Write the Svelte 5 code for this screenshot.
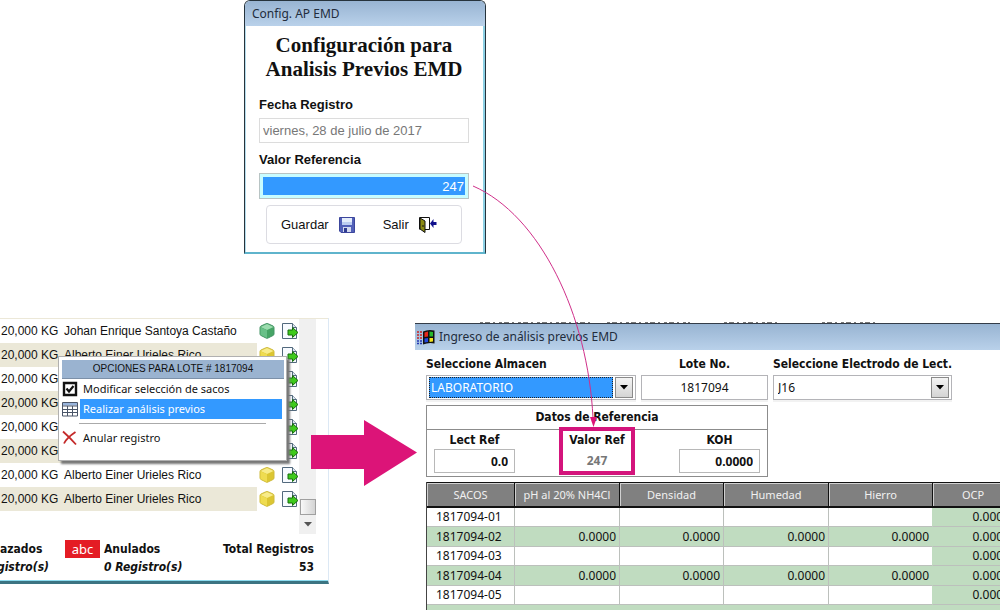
<script>
  const lots = [
    { name: 'Johan Enrique Santoya Castaño', tone: 'green' },
    { name: 'Alberto Einer Urieles Rico', tone: 'gold' },
    { name: '', tone: '' },
    { name: '', tone: '' },
    { name: '', tone: '' },
    { name: '', tone: '' },
    { name: 'Alberto Einer Urieles Rico', tone: 'gold' },
    { name: 'Alberto Einer Urieles Rico', tone: 'gold' }
  ];
  const heads = ['SACOS', 'pH al 20% NH4Cl', 'Densidad', 'Humedad', 'Hierro', 'OCP'];
  const sacks = [
    { id: '1817094-01', v: '' },
    { id: '1817094-02', v: '0.0000' },
    { id: '1817094-03', v: '' },
    { id: '1817094-04', v: '0.0000' },
    { id: '1817094-05', v: '' }
  ];
  let reference = $state('247');
</script>

{#snippet cube(tone)}
  <svg class="cube" width="18" height="18" viewBox="0 0 18 18" aria-hidden="true">
    <path d="M9 1.500Q10 1.500 15 4Q16 4.500 16 5.500V12Q16 13 15 13.500L10 16Q9 16.500 8 16L3 13.500Q2 13 2 12V5.500Q2 4.500 3 4Q8 1.500 9 1.500Z" fill={tone === 'green' ? '#46a465' : '#dcc632'} stroke={tone === 'green' ? '#459566' : '#cfbb3c'} />
    <path d="M9 2 15.500 5 9 8 2.500 5Z" fill={tone === 'green' ? '#9bdcae' : '#f8ec8a'} />
    <path d="M2.500 5.200 9 8.200V16L2.500 12.800Z" fill={tone === 'green' ? '#69c088' : '#efdc50'} />
  </svg>
{/snippet}

{#snippet exportIcon()}
  <svg class="export" width="17" height="18" viewBox="0 0 17 18" aria-hidden="true">
    <path d="M.5 1.500H10.500L14.500 5.500V16.500H.5Z" fill="#f8fbff" stroke="#52697d" />
    <path d="M10.500 1.500V5.500H14.500" fill="#dce6ee" stroke="#52697d" />
    <path d="M6 8H10.500V5.500L16 10.500 10.500 15.500V13H6Z" fill="#3fca1c" stroke="#176d0c" />
  </svg>
{/snippet}

<main class="stage">
  <section class="dialog">
    <header class="caption">Config. AP EMD</header>
    <form class="dialog-body" onsubmit={(e) => e.preventDefault()}>
      <h1>Configuración para<br />Analisis Previos EMD</h1>
      <label for="fecha">Fecha Registro</label>
      <input id="fecha" class="date" value="viernes, 28 de julio de 2017" readonly />
      <label for="valor">Valor Referencia</label>
      <div class="focus-ring"><input id="valor" bind:value={reference} /></div>
      <div class="actions">
        <button type="submit">Guardar
          <svg width="16" height="16" viewBox="0 0 16 16" aria-hidden="true">
            <path d="M.5.5H15.5V15.5H2L.5 14Z" fill="#5260b8" stroke="#3c469c" />
            <path d="M3 1H13V8H3Z" fill="#e4edfb" />
            <path d="M3 5H13V8H3Z" fill="#bccdf0" />
            <path d="M4 10H12V15H4Z" fill="#d3d9ee" />
            <path d="M5 11H8V15H5Z" fill="#303c90" />
          </svg>
        </button>
        <button type="button">Salir
          <svg width="18" height="16" viewBox="0 0 18 16" aria-hidden="true">
            <path d="M.5 12.5V.5H10.5V12.5H6" fill="#fff" stroke="#111" />
            <path d="M1 1 6 4V15.5L1 12Z" fill="#8a8a12" stroke="#111" />
            <path d="M4 8V10" stroke="#111" />
            <path d="M11 6.500 14.500 2V5H17.500V8H14.500V11Z" fill="#10108c" />
          </svg>
        </button>
      </div>
    </form>
  </section>

  <section class="lots">
    <div class="lots-list">
      <table class="lot-table">
        <tbody>
          {#each lots as lot}
            <tr>
              <td class="kg">20,000 KG</td>
              <td class="name">{lot.name}</td>
              <td class="icon">{#if lot.tone}{@render cube(lot.tone)}{/if}</td>
              <td class="icon file">{@render exportIcon()}</td>
            </tr>
          {/each}
        </tbody>
      </table>
      <div class="scroll" aria-hidden="true">
        <span class="thumb"></span>
        <svg width="8" height="5" viewBox="0 0 8 5"><path d="M0 0H8L4 4.500Z" fill="#555" /></svg>
      </div>
    </div>
    <footer class="totals">
      <div class="cut"><b>azados</b><i>gistro(s)</i></div>
      <span class="abc">abc</span>
      <div class="voided"><b>Anulados</b><i>0 Registro(s)</i></div>
      <div class="total"><b>Total Registros</b><b>53</b></div>
    </footer>
  </section>

  <nav class="menu">
    <h2>OPCIONES PARA LOTE # 1817094</h2>
    <button>
      <svg width="16" height="16" viewBox="0 0 16 16" aria-hidden="true">
        <path d="M2 2H14V14H2Z" fill="#fff" stroke="#111" stroke-width="2.400" />
        <path d="M4.500 7.500 7 10.500 11.500 5" fill="none" stroke="#111" stroke-width="2.200" />
      </svg>
      <span>Modificar selección de sacos</span>
    </button>
    <button class="active">
      <svg width="16" height="16" viewBox="0 0 16 16" aria-hidden="true">
        <path d="M.5 1.500H15.500V15H.5Z" fill="#fff" stroke="#4a5568" />
        <path d="M1 2H15V4.500H1Z" fill="#98b4dc" />
        <path d="M1 5H15M1 8.500H15M1 11.500H15M5.500 5V15M10.500 5V15" fill="none" stroke="#4a5568" />
      </svg>
      <span>Realizar análisis previos</span>
    </button>
    <hr />
    <button>
      <svg width="16" height="16" viewBox="0 0 16 16" aria-hidden="true">
        <path d="M1 1.500C5 5 10 10 14 14.500M13.500 2C9 5 4 9 2 13.500" fill="none" stroke="#c42a2a" stroke-width="1.800" />
      </svg>
      <span>Anular registro</span>
    </button>
  </nav>

  <section class="entry">
    <svg class="remnant" width="500" height="3" viewBox="0 0 500 3" aria-hidden="true">
      <path d="M65 2.500H175M192 2.500H275M309 2.500H366M407 2.500H462" stroke="#777" stroke-dasharray="3 2 5 3 2 4" fill="none" />
    </svg>
    <header class="caption">
      <svg width="18" height="16" viewBox="0 0 18 16" aria-hidden="true">
        <path d="M6 2.500Q11 0 17.500 1.500V14.500Q12 13 6 15.500Z" fill="#111" />
        <path d="M7.500 3.500 11 2.500V7.500L7.500 8Z" fill="#e8281c" />
        <path d="M12.500 2.500 16 3V7.500H12.500Z" fill="#26b82c" />
        <path d="M7.500 9.500 11 9V13L7.500 13.500Z" fill="#2448e0" />
        <path d="M12.500 9H16V12.500L12.500 13Z" fill="#f4e41c" />
        <path d="M0 3H5M0 6H5M0 9H5" stroke="#c82424" stroke-width="1.500" stroke-dasharray="2 1" />
        <path d="M0 12H5M0 14.500H5" stroke="#2438b4" stroke-width="1.500" stroke-dasharray="2 1" />
      </svg>
      Ingreso de análisis previos EMD
    </header>
    <div class="entry-body">
      <div class="fields">
        <div class="field store">
          <label for="almacen">Seleccione Almacen</label>
          <div class="combo">
            <select id="almacen" class="picked"><option>LABORATORIO</option></select>
            <span class="drop"><svg width="8" height="5" viewBox="0 0 8 5"><path d="M0 0H8L4 4.500Z" /></svg></span>
          </div>
        </div>
        <div class="field lot">
          <label for="lote">Lote No.</label>
          <input id="lote" value="1817094" />
        </div>
        <div class="field electrode">
          <label for="electrodo">Seleccione Electrodo de Lect.</label>
          <div class="combo">
            <select id="electrodo"><option>J16</option></select>
            <span class="drop"><svg width="8" height="5" viewBox="0 0 8 5"><path d="M0 0H8L4 4.500Z" /></svg></span>
          </div>
        </div>
      </div>

      <section class="refs">
        <h2>Datos de Referencia</h2>
        <div class="ref-row">
          <div class="ref"><label for="lect">Lect Ref</label><input id="lect" value="0.0" /></div>
          <div class="ref marked"><label for="vref">Valor Ref</label><input id="vref" value={reference} readonly /></div>
          <div class="ref"><label for="koh">KOH</label><input id="koh" value="0.0000" /></div>
        </div>
      </section>

      <table class="grid">
        <colgroup><col class="c-id" /><col class="c-a" /><col class="c-b" /><col class="c-a" /><col class="c-b" /><col class="c-last" /></colgroup>
        <thead><tr>{#each heads as h}<th>{h}</th>{/each}</tr></thead>
        <tbody>
          {#each sacks as s}
            <tr>
              <td>{s.id}</td><td>{s.v}</td><td>{s.v}</td><td>{s.v}</td><td>{s.v}</td><td>0.0000</td>
            </tr>
          {/each}
          <tr class="tail"><td colspan="6"></td></tr>
        </tbody>
      </table>
    </div>
  </section>

  <svg class="links" width="1000" height="611" viewBox="0 0 1000 611" aria-hidden="true">
    <path d="M473 186C540 215 588 315 593 418" fill="none" stroke="#d0308a" />
    <path d="M590 417H597L593.500 427Z" fill="#dc1478" />
    <path d="M311 435H364V420L417 452.500 364 486V469H311Z" fill="#dc1478" />
  </svg>
</main>

<style>
  :global(body) { margin: 0; background: #fff; }
  .stage {
    position: relative;
    min-height: 100vh;
    overflow: hidden;
    color: #111;
    font: 12px/16px "Noto Sans", "Open Sans", sans-serif;
  }
  input, select, button { box-sizing: border-box; min-width: 0; margin: 0; font: inherit; color: inherit; border-radius: 0; outline: 0; }
  button { padding: 0; border: 0; background: none; }
  h1, h2 { margin: 0; }
  .caption { background: linear-gradient(#98b4d2, #b9d1ea); color: #222c3c; }

  .dialog {
    position: absolute;
    left: 244px;
    top: 0;
    width: 240px;
    border: 1px solid #26333c;
    border-bottom: 2px solid #5fb4cc;
    border-radius: 6px 6px 0 0;
    overflow: hidden;
    background: #fff;
  }
  .dialog .caption { padding: 5px 7px 4px; }
  .dialog-body {
    display: flex;
    flex-direction: column;
    padding: 7px 14px 8px 13px;
    border-left: 1px solid #b4dcec;
    border-right: 2px solid #8cd0e4;
    font-family: "Liberation Sans", Arial, sans-serif;
    font-size: 13px;
  }
  h1 { font: bold 21px/24px "Liberation Serif", serif; text-align: center; margin-bottom: 15px; white-space: nowrap; }
  .dialog-body label { font-weight: bold; line-height: 18px; margin-bottom: 4px; }
  .date { height: 25px; padding: 0 3px; border: 1px solid #dcdcdc; color: #777; margin-bottom: 8px; }
  .focus-ring { display: flex; border: 1px solid #b8c4c4; background: #c8fcff; padding: 3px; }
  .focus-ring input { flex: 1; height: 18px; border: 0; padding: 0 1px; background: #3399ff; color: #fff; text-align: right; }
  .actions { display: flex; gap: 28px; margin: 6px 7px 0; padding: 10px 14px 9px; border: 1px solid #dcdce2; border-radius: 4px; }
  .actions button { display: flex; align-items: center; gap: 10px; height: 18px; }

  .lots { position: absolute; left: 0; top: 318px; width: 328px; border-right: 1px solid #dce8f4; border-bottom: 3px solid #3c7482; }
  .lots-list { display: flex; border-top: 1px solid #ece8d8; }
  .lot-table { flex: 1; align-self: flex-start; border-collapse: collapse; font: 12px/24px "Liberation Sans", Arial, sans-serif; }
  .lot-table td { padding: 0; height: 24px; white-space: nowrap; }
  .kg { width: 64px; text-indent: 1px; }
  .name { width: 193px; }
  .icon { width: 20px; line-height: 0; text-align: center; }
  .icon svg { vertical-align: middle; }
  .lot-table .file { width: 22px; text-align: right; }
  .lot-table tr:nth-child(even) .kg, .lot-table tr:nth-child(even) .name { background: #ebe8d8; }
  .scroll { display: flex; flex-direction: column; align-items: center; width: 17px; height: 215px; margin-right: 12px; background: #f0f0f0; }
  .thumb { box-sizing: border-box; width: 16px; height: 16px; margin: auto 0 7px; border: 1px solid #a0a0a0; background: linear-gradient(90deg, #f8f8f8, #d4d4d4); }
  .scroll svg { margin-bottom: 7px; }
  .totals { display: flex; align-items: flex-start; padding: 6px 14px 4px 0; font-family: "DejaVu Sans Condensed", "DejaVu Sans", sans-serif; line-height: 18px; border-bottom: 1px solid #8cdcf0; }
  .totals div { display: flex; flex-direction: column; white-space: nowrap; }
  .totals i { font-weight: bold; }
  .totals .cut { width: 49px; overflow: hidden; }
  .cut i { align-self: flex-end; }
  .abc { width: 35px; margin: 0 4px 0 16px; background: #e41c24; color: #fff; text-align: center; font-size: 13px; font-family: "Noto Sans", sans-serif; }
  .totals .total { margin-left: auto; text-align: right; }

  .menu { position: absolute; left: 58px; top: 356px; width: 222px; padding: 3px 2px 12px 3px; background: #fff; border: 1px solid #b0b0b0; box-shadow: 3px 3px 2px #777; font-size: 11px; }
  .menu h2 { background: #9ab3d0; font: 10px/18px "Liberation Sans", Arial, sans-serif; text-align: center; border-bottom: 1px solid #7c90a8; white-space: nowrap; }
  .menu button { display: flex; align-items: center; width: 220px; height: 20px; text-align: left; }
  .menu svg { margin-right: 2px; }
  .menu span { flex: 1; padding-left: 3px; line-height: 20px; }
  .menu .active span { background: #3399ff; color: #fff; }
  .menu hr { margin: 4px 18px 4px 17px; border: 0; border-top: 1px solid #aaa; }

  .entry { position: absolute; left: 415px; right: 0; top: 320px; overflow: hidden; }
  .remnant { display: block; }
  .entry .caption { display: flex; align-items: center; gap: 4px; height: 26px; padding-left: 2px; border-top: 1px solid #333c48; }
  .entry-body { padding: 5px 0 0 11px; }
  .fields { display: flex; gap: 5px; }
  .field { display: flex; flex-direction: column; }
  .store { width: 210px; }
  .lot { width: 127px; text-align: center; }
  .electrode { width: 179px; }
  .field label, .ref label, .refs h2 { font: bold 12px/18px "DejaVu Sans Condensed", "DejaVu Sans", sans-serif; white-space: nowrap; }
  .field input, .combo { box-sizing: border-box; height: 25px; margin-top: 2px; border: 1px solid #b4b4b8; background: #fff; box-shadow: 0 2px #f2f2f2; }
  .field input { text-align: center; }
  .combo { display: flex; padding: 1px 2px; }
  .combo select { flex: 1; appearance: none; border: 0; padding: 0 2px; background: #fff; }
  .combo .picked { background: #3399ff; color: #fff; border: 1px dotted #222; padding: 0 1px; }
  .drop { display: flex; align-items: center; justify-content: center; width: 16px; margin-left: 2px; border: 1px solid #8a8a8a; background: linear-gradient(#f4f4f4, #d4d4d4); }

  .refs { width: 340px; margin-top: 5px; border: 1px solid #8c8c8c; }
  .refs h2 { line-height: 23px; text-align: center; border-bottom: 1px solid #8c8c8c; }
  .ref-row { display: flex; justify-content: space-between; align-items: flex-start; height: 46px; padding: 0 7px; }
  .ref { display: flex; flex-direction: column; width: 81px; text-align: center; padding-top: 1px; }
  .ref input { width: 100%; height: 24px; border: 1px solid #b8b8b8; padding: 0 6px; font-weight: bold; text-align: right; }
  .ref.marked { box-sizing: border-box; width: 76px; height: 48px; margin-top: -3px; padding: 0; border: 4px solid #d4147c; }
  .marked input { border: 0; padding: 0; text-align: center; color: #777; background: none; }

  .grid { width: 588px; margin-top: 5px; table-layout: fixed; border-collapse: separate; border-spacing: 0; border-left: 1px solid #444; }
  .c-id { width: 88px; }
  .c-a { width: 105px; }
  .c-b { width: 104px; }
  .c-last { width: 81px; }
  .grid th { height: 23px; padding: 0; background: #808080; color: #f0f0f0; font-size: 11px; font-weight: normal; border: solid #111; border-width: 1px 1px 2px 0; box-shadow: inset 1px 1px #d0d0d0; }
  .grid td { box-sizing: border-box; height: 20px; padding: 0 3px 0 0; line-height: 18px; text-align: right; border: solid #bcc0bc; border-width: 0 1px 1px 0; }
  .grid tr:nth-child(odd) td { height: 19px; }
  .grid tr:nth-child(even) td, .grid td:last-child { background: #c0dcc0; }
  .grid td:first-child { padding-left: 9px; text-align: left; }
  .grid td:nth-child(5) { border-right-color: #c0dcc0; }
  .grid .tail td { height: 5px; padding: 0; border: 0; line-height: 0; }

  .links { position: absolute; left: 0; top: 0; pointer-events: none; }
</style>
